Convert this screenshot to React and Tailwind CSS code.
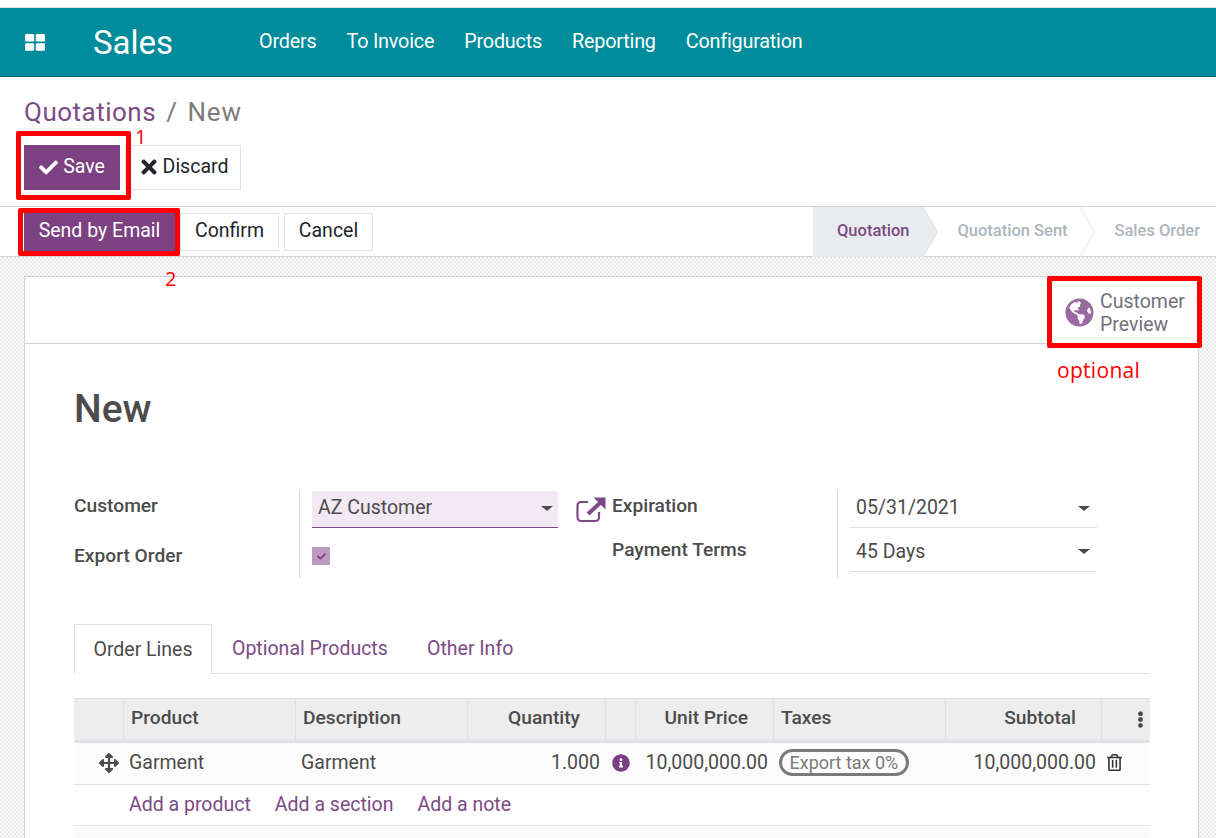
import { FaCheck, FaTimes, FaGlobeAmericas, FaArrowsAlt, FaInfoCircle, FaRegTrashAlt, FaEllipsisV } from 'react-icons/fa';

const navItems = ['Orders', 'To Invoice', 'Products', 'Reporting', 'Configuration'];

const AppsIcon = () => (
  <svg width="20" height="17" viewBox="0 0 20 17" fill="#fff">
    <rect x="0" y="0" width="9.2" height="7.6" rx="1.4" />
    <rect x="10.8" y="0" width="9.2" height="7.6" rx="1.4" />
    <rect x="0" y="9.2" width="9.2" height="7.6" rx="1.4" />
    <rect x="10.8" y="9.2" width="9.2" height="7.6" rx="1.4" />
  </svg>
);

const ExternalLink = () => (
  <svg width="30" height="26" viewBox="0 0 30 26" fill="none" className="shrink-0">
    <path d="M12 5H5a3.5 3.5 0 0 0-3.5 3.5v12A3.5 3.5 0 0 0 5 24h14.5a3.5 3.5 0 0 0 3.5-3.5V15" stroke="#7C4A85" strokeWidth="2.2" />
    <path d="M12 17L24 6" stroke="#7C4A85" strokeWidth="4" />
    <path d="M17.5 0.5H29.5V12.5Z" fill="#7C4A85" />
  </svg>
);

const Caret = () => (
  <span className="w-0 h-0 border-x-[6px] border-x-transparent border-t-[5px] border-t-[#4c4c4c]" />
);

const Mark = ({ className, children }) => (
  <div className={`absolute border-[5px] border-[#ff0000] rounded-[2px] pointer-events-none ${className}`}>{children}</div>
);

const Note = ({ className, children }) => (
  <span className={`absolute text-[#ff0000] font-['Open_Sans',sans-serif] ${className}`}>{children}</span>
);

const HeadCell = ({ right, children }) => (
  <div className={`flex items-center pl-[7px] pb-[2px] border-r border-[#dee2e6] text-[19.2px] font-medium text-[#4c4c4c] ${right ? 'justify-end pr-[25px]' : ''}`}>
    {children}
  </div>
);

export default function App() {
  return (
    <div className="relative w-[1216px] h-[838px] overflow-hidden bg-white font-['Roboto',sans-serif] text-[#4c4c4c]">
      <div className="h-[8px] border-b border-[#dfe0e2] bg-white" />
      <header className="flex items-center h-[69px] bg-[#008c9b] border-b border-[#00606b] text-white">
        <div className="ml-[25px] w-[68px] flex"><AppsIcon /></div>
        <div className="text-[33px] leading-none w-[166px]">Sales</div>
        <nav className="flex gap-[30px] text-[19.8px] tracking-[-0.2px]">
          {navItems.map((item) => <span key={item}>{item}</span>)}
        </nav>
      </header>

      <div className="h-[130px] pl-[24px] pt-[19px] border-b border-[#ced4da]">
        <div className="flex text-[26px] leading-[32px] tracking-[0.5px]">
          <span className="text-[#7c4a85]">Quotations</span>
          <span className="text-[#7b7b7b] ml-[10px]">/</span>
          <span className="text-[#7b7b7b] ml-[10px] tracking-[0.9px]">New</span>
        </div>
        <div className="flex mt-[17px] text-[19.5px]">
          <button className="flex items-center gap-[5px] w-[96px] h-[45px] pb-[1px] justify-center bg-[#7c4180] text-white">
            <FaCheck size={19} /> Save
          </button>
          <button className="flex items-center gap-[3px] w-[116px] h-[45px] pb-[1px] justify-center ml-[5px] bg-white border border-[#dee2e6] text-[#212529]">
            <FaTimes size={22} /> Discard
          </button>
        </div>
      </div>

      <div className="flex items-center justify-between h-[50px] pl-[24px] border-b border-[#ced4da]">
        <div className="flex gap-[5px] text-[19.5px] text-[#212529]">
          <button className="w-[151px] h-[38px] pb-[1px] bg-[#7c4180] text-white">Send by Email</button>
          <button className="w-[99px] h-[38px] pb-[1px] border border-[#dee2e6]">Confirm</button>
          <button className="w-[89px] h-[38px] pb-[1px] border border-[#dee2e6]">Cancel</button>
        </div>
        <div className="flex items-center h-full text-[16.5px] font-medium text-[#adb5bd]">
          <svg width="125" height="50" viewBox="0 0 125 50" className="shrink-0">
            <path d="M0 0H110L125 25L110 50H0Z" fill="#e9ecef" stroke="none" />
            <path d="M110 0L125 25L110 50" fill="none" stroke="#dee2e6" />
          </svg>
          <span className="absolute left-[837px] text-[#7c4a85]">Quotation</span>
          <span className="ml-[19px] w-[138px] whitespace-nowrap">Quotation Sent</span>
          <svg width="15" height="50" viewBox="0 0 15 50" className="shrink-0 -ml-[15px]">
            <path d="M0 0L15 25L0 50" fill="none" stroke="#dee2e6" />
          </svg>
          <span className="ml-[19px] mr-[16px] whitespace-nowrap">Sales Order</span>
        </div>
      </div>

      <div className="h-[581px] pt-[19px] pl-[24px] bg-[repeating-conic-gradient(#e8e8e8_0_25%,#fbfbfb_0_50%)] bg-[length:4px_4px]">
        <div className="w-[1175px] h-[600px] bg-white border border-[#ced4da]">
          <div className="flex justify-end h-[67px] border-b border-[#ced4da]">
            <div className="flex items-center gap-[6px] w-[133px] pt-[5px] text-[19.5px] leading-[23px] text-[#71717a]">
              <FaGlobeAmericas size={29} className="text-[#986a9f] shrink-0" />
              <span>Customer<br />Preview</span>
            </div>
          </div>

          <div className="pl-[49px] pr-[48px]">
            <h1 className="mt-[40px] text-[39px] leading-[50px] font-medium text-[#4c4c4c]">New</h1>

            <div className="flex mt-[57px] text-[19.5px] h-[88px]">
              <div className="w-[226px] font-medium text-[19.2px] border-r border-[#dcdcdc]">
                <div className="h-[30px] leading-[30px]">Customer</div>
                <div className="h-[30px] leading-[30px] mt-[20px]">Export Order</div>
              </div>
              <div className="w-[258px] pl-[12px]">
                <div className="flex items-center justify-between h-[37px] pb-[2px] pl-[6px] pr-[5px] bg-[#f3e9f4] border-b border-[#7c4a85]">
                  <span>AZ Customer</span>
                  <Caret />
                </div>
                <div className="mt-[19px] flex items-center justify-center w-[18px] h-[18px] bg-[#bd9bc1]">
                  <FaCheck size={9} className="text-[#7c4180]" />
                </div>
              </div>
              <div className="w-[18px]" />
              <div className="pt-[6px] w-[36px]"><ExternalLink /></div>
              <div className="w-[226px] font-medium text-[19.2px] border-r border-[#dcdcdc]">
                <div className="h-[30px] leading-[30px]">Expiration</div>
                <div className="h-[30px] leading-[30px] mt-[14px]">Payment Terms</div>
              </div>
              <div className="w-[259px] pl-[12px]">
                <div className="flex items-center justify-between h-[37px] pb-[2px] pl-[6px] pr-[7px] border-b border-[#dee2e6]">
                  <span>05/31/2021</span>
                  <Caret />
                </div>
                <div className="flex items-center justify-between h-[44px] pt-[4px] pl-[6px] pr-[7px] border-b border-[#dee2e6]">
                  <span>45 Days</span>
                  <Caret />
                </div>
              </div>
            </div>

            <div className="flex mt-[45px] h-[50px] border-b border-[#dee2e6] text-[19.5px] text-[#7c4a85]">
              <div className="flex items-center justify-center w-[138px] h-[50px] bg-white border border-b-0 border-[#dee2e6] text-[#4c4c4c]">Order Lines</div>
              <div className="flex items-center pl-[20px] w-[195px]">Optional Products</div>
              <div className="flex items-center pl-[20px]">Other Info</div>
            </div>

            <div className="mt-[24px] text-[19.5px]">
              <div className="grid grid-cols-[50px_172px_172px_138px_30px_138px_172px_156px_48px] h-[45px] bg-[#ededed] border-t border-[#dee2e6] border-b-[3px] border-b-[#dee2e6]">
                <HeadCell />
                <HeadCell>Product</HeadCell>
                <HeadCell>Description</HeadCell>
                <HeadCell right>Quantity</HeadCell>
                <HeadCell />
                <HeadCell right>Unit Price</HeadCell>
                <HeadCell>Taxes</HeadCell>
                <HeadCell right>Subtotal</HeadCell>
                <div className="flex items-center justify-end pr-[1px]"><FaEllipsisV size={17} /></div>
              </div>
              <div className="grid grid-cols-[50px_172px_172px_138px_30px_138px_172px_156px_48px] items-center h-[42px] pb-[2px] bg-[#fcfcfc] border-b border-[#dee2e6]">
                <div className="flex justify-end pr-[5px]"><FaArrowsAlt size={20} /></div>
                <div className="pl-[5px]">Garment</div>
                <div className="pl-[5px]">Garment</div>
                <div className="text-right pr-[6px]">1.000</div>
                <div className="flex justify-center"><FaInfoCircle size={18} className="text-[#7c3f85]" /></div>
                <div className="text-right pr-[6px] whitespace-nowrap">10,000,000.00</div>
                <div className="pl-[5px]">
                  <span className="inline-flex items-center h-[27px] px-[7.5px] rounded-full border-[3px] border-[#7a7a7a] text-[18px] text-[#7a7a7a] whitespace-nowrap">Export tax 0%</span>
                </div>
                <div className="text-right pr-[6px] whitespace-nowrap">10,000,000.00</div>
                <div className="pl-[4px]"><FaRegTrashAlt size={17} className="text-[#333]" /></div>
              </div>
              <div className="flex items-center gap-[24px] h-[41px] pl-[55px] border-b border-[#e5e5e5] text-[#7c4a85]">
                <span>Add a product</span>
                <span>Add a section</span>
                <span>Add a note</span>
              </div>
              <div className="h-[20px] bg-[#fafafa]" />
            </div>
          </div>
        </div>
      </div>

      <Mark className="left-[16px] top-[131px] w-[115px] h-[69px]" />
      <Mark className="left-[18px] top-[208px] w-[162px] h-[48px]" />
      <Mark className="left-[1047px] top-[276px] w-[155px] h-[72px]" />
      <Note className="left-[135px] top-[122px] text-[20px]">1</Note>
      <Note className="left-[165px] top-[264px] text-[20px]">2</Note>
      <Note className="left-[1057px] top-[355px] text-[21px] tracking-[0.3px]">optional</Note>
    </div>
  );
}
